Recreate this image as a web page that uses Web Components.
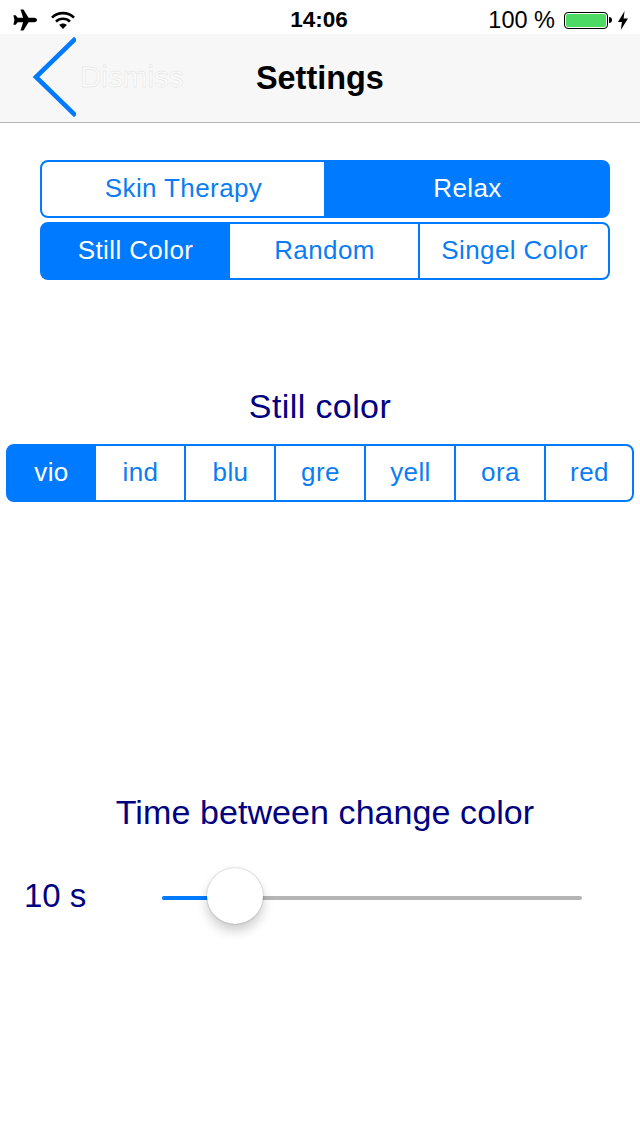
<!DOCTYPE html>
<html>
<head>
<meta charset="utf-8">
<style>
  html, body { margin: 0; background: #fff; }
  body { width: 640px; height: 1136px; overflow: hidden; font-family: "Liberation Sans", Arial, sans-serif; }
  .first { margin: 37px 30px 0 40px; }
  .second { margin: 4px 30px 0 40px; --first: 0 0 188px; --cell: 0 0 190px; }
  .third { margin: 0 6px; --first: 0 0 88px; --cell: 0 0 90px; }
</style>
</head>
<body>
<status-bar></status-bar>
<nav-bar title="Settings" back="Dismiss"></nav-bar>

<seg-control class="first">
  <seg-item>Skin Therapy</seg-item>
  <seg-item selected>Relax</seg-item>
</seg-control>
<seg-control class="second">
  <seg-item selected>Still Color</seg-item>
  <seg-item>Random</seg-item>
  <seg-item>Singel Color</seg-item>
</seg-control>

<section-label style="--top: 106px; --gap: 18px; --track: .4px">Still color</section-label>
<seg-control class="third">
  <seg-item selected>vio</seg-item>
  <seg-item>ind</seg-item>
  <seg-item>blu</seg-item>
  <seg-item>gre</seg-item>
  <seg-item>yell</seg-item>
  <seg-item>ora</seg-item>
  <seg-item>red</seg-item>
</seg-control>

<section-label style="--top: 290px; --shift: 10px; --track: .08px">Time between change color</section-label>
<time-slider value="10 s"></time-slider>

<script>
class StatusBar extends HTMLElement {
  constructor() {
    super();
    this.attachShadow({ mode: "open" });
  }
  connectedCallback() {
    this.shadowRoot.innerHTML = `
      <style>
        :host { display: grid; grid-template-columns: 1fr auto 1fr; align-items: center; box-sizing: border-box; height: 34px; padding-top: 6px; background: #fff; color: #000; }
        .left { display: flex; align-items: center; gap: 14px; padding-left: 13px; }
        .time { font-weight: 700; font-size: 22.5px; padding-right: 2px; }
        .right { display: flex; align-items: center; justify-content: flex-end; padding-right: 12px; }
        .pct { font-size: 23.5px; margin-right: 9px; }
        .batt { box-sizing: border-box; width: 44px; height: 17px; border: 1px solid #000; border-radius: 4px; background: #4cd964; box-shadow: inset 0 0 0 1px #fff; }
        .nub { width: 3px; height: 6px; background: #000; border-radius: 0 3px 3px 0; margin: 0 6px 0 1px; }
        svg { display: block; }
      </style>
      <div class="left">
        <svg width="24" height="22" viewBox="0 0 24 22"><path d="M7.5 0.5h3l5 8.3h5.6c1.6 0 2.9 1 2.9 2.2s-1.3 2.2-2.9 2.2h-5.6l-5 8.3h-3l2.6-8.3H4.6l-1.9 2.6H0.4l1-4.8-1-4.8h2.3l1.9 2.6h5.5z" fill="#000"/></svg>
        <svg width="24" height="18" viewBox="0 0 24 18" fill="none" stroke="#000" stroke-width="2.6"><path d="M1 6.6c6-6 16-6 22 0"/><path d="M5 10.6c3.8-3.8 10.2-3.8 14 0"/><path d="M12 18l-3.8-4.1c2.1-2 5.5-2 7.6 0z" fill="#000" stroke="none"/></svg>
      </div>
      <div class="time">14:06</div>
      <div class="right">
        <span class="pct">100 %</span>
        <div class="batt"></div>
        <div class="nub"></div>
        <svg width="10" height="19" viewBox="0 0 10 19"><path d="M6.6 0L0 11h3.9L2.8 19 10 7.6H5.6z" fill="#000"/></svg>
      </div>`;
  }
}
customElements.define("status-bar", StatusBar);

class NavBar extends HTMLElement {
  constructor() {
    super();
    this.attachShadow({ mode: "open" });
  }
  connectedCallback() {
    this.shadowRoot.innerHTML = `
      <style>
        :host { display: block; height: 88px; background: #f7f7f7; border-bottom: 1px solid #b2b2b2; }
        .row { display: flex; align-items: center; height: 88px; padding-left: 30px; }
        svg { display: block; flex: none; margin-top: -3px; }
        .back { font-size: 29.6px; color: #fbfbfb; -webkit-text-stroke: 0.4px #e0e0e0; margin-left: 4px; margin-top: -2px; width: 176px; }
        h1 { margin: 0; font-size: 32.4px; font-weight: 700; color: #000; }
      </style>
      <div class="row">
        <svg width="46" height="84" viewBox="0 0 46 84" fill="none"><path d="M44 5L6 42l38 37" stroke="#007aff" stroke-width="4.6" stroke-linecap="square"/></svg>
        <span class="back">${this.getAttribute("back")}</span>
        <h1>${this.getAttribute("title")}</h1>
      </div>`;
  }
}
customElements.define("nav-bar", NavBar);

class SegControl extends HTMLElement {
  constructor() {
    super();
    this.attachShadow({ mode: "open" });
    this.shadowRoot.innerHTML = `
      <style>
        :host { display: flex; height: 54px; border: 2px solid #007aff; border-radius: 8px; overflow: hidden; background: #007aff; }
      </style>
      <slot></slot>`;
  }
}
customElements.define("seg-control", SegControl);

class SegItem extends HTMLElement {
  constructor() {
    super();
    this.attachShadow({ mode: "open" });
    this.shadowRoot.innerHTML = `
      <style>
        :host { display: flex; flex: var(--cell, 1 1 0); align-items: center; justify-content: center; box-sizing: border-box; padding: 0 0 2px 1px; font-size: 26px; letter-spacing: .4px; color: #0a7df5; background: #fff; border-right: 2px solid #007aff; }
        :host(:first-child) { flex: var(--first, 1 1 0); }
        :host(:last-child) { flex: 1 1 0; border-right: 0; }
        :host([selected]) { background: #007aff; color: #fff; }
      </style>
      <slot></slot>`;
  }
}
customElements.define("seg-item", SegItem);

class SectionLabel extends HTMLElement {
  constructor() {
    super();
    this.attachShadow({ mode: "open" });
    this.shadowRoot.innerHTML = `
      <style>
        :host { display: block; margin-top: var(--top, 0); margin-bottom: var(--gap, 0); padding-left: var(--shift, 0); text-align: center; font-size: 34px; letter-spacing: var(--track, 0); line-height: 40px; color: #000080; }
      </style>
      <slot></slot>`;
  }
}
customElements.define("section-label", SectionLabel);

class TimeSlider extends HTMLElement {
  constructor() {
    super();
    this.attachShadow({ mode: "open" });
  }
  connectedCallback() {
    this.shadowRoot.innerHTML = `
      <style>
        :host { display: flex; align-items: center; height: 56px; margin-top: 36px; padding-left: 24px; color: #000080; font-size: 33px; }
        .val { width: 138px; flex: none; }
        .track { position: relative; width: 420px; height: 4px; margin-top: 4px; border-radius: 2px; background: #b5b5b5; }
        .fill { width: 50px; height: 4px; border-radius: 2px 0 0 2px; background: #007aff; }
        .thumb { position: absolute; left: 45px; top: -28px; width: 56px; height: 56px; border-radius: 50%; background: #fff; box-shadow: 0 7px 12px rgba(0,0,0,.2), 0 0 2px rgba(0,0,0,.3); }
      </style>
      <span class="val">${this.getAttribute("value")}</span>
      <div class="track"><div class="fill"></div><div class="thumb"></div></div>`;
  }
}
customElements.define("time-slider", TimeSlider);
</script>
</body>
</html>
